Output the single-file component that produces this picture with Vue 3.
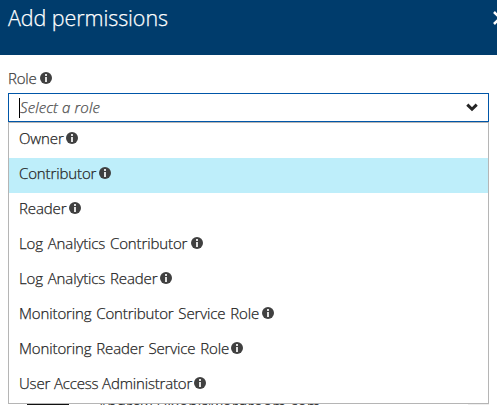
<script setup>
const roles = [
  { name: 'Owner', width: 42.5 },
  { name: 'Contributor', width: 76, active: true },
  { name: 'Reader', width: 45.5 },
  { name: 'Log Analytics Contributor', width: 168 },
  { name: 'Log Analytics Reader', width: 137 },
  { name: 'Monitoring Contributor Service Role', width: 239 },
  { name: 'Monitoring Reader Service Role', width: 208 },
  { name: 'User Access Administrator', width: 171, tight: true },
]
</script>

<template>
  <div class="blade">
    <header class="head">
      <h1>Add permissions</h1>
      <svg class="close" width="14" height="14" viewBox="0 0 14 14"><path d="M1 1L13 13M13 1L1 13" /></svg>
    </header>
    <main class="body">
      <div class="label">
        <span>Role</span>
        <svg class="info" width="12" height="12" viewBox="0 0 12 12"><circle cx="6" cy="6" r="6" /><path d="M5 2h2v2H5zM5 5h2v5H5z" /></svg>
      </div>
      <div class="select">
        <span class="caret"></span>
        <span class="placeholder">Select a role</span>
        <svg class="chevron" width="12" height="9" viewBox="0 0 12 9"><path d="M1.3 1.6L6 6.2L10.7 1.6" /></svg>
      </div>
      <ul class="menu">
        <li v-for="role in roles" :key="role.name" :class="{ active: role.active, tight: role.tight }">
          <span class="name" :style="{ width: role.width + 'px' }">{{ role.name }}</span>
          <svg class="info" width="12" height="12" viewBox="0 0 12 12"><circle cx="6" cy="6" r="6" /><path d="M5 2h2v2H5zM5 5h2v5H5z" /></svg>
        </li>
      </ul>
      <div class="member">
        <span class="avatar"></span>
        <span class="mail">Andrew.Dixon@wordroom.com</span>
        <span class="scroll"></span>
      </div>
    </main>
  </div>
</template>

<style>
body { background: #fff; overflow: hidden; }
</style>

<style scoped>
.blade {
  width: 497px;
  height: 405px;
  overflow: hidden;
  font-family: "Open Sans", "Noto Sans", sans-serif;
  font-size: 15px;
  font-weight: 300;
  letter-spacing: -0.17px;
  -webkit-text-stroke: 0.25px;
  color: #252525;
}
.head {
  height: 55px;
  box-sizing: border-box;
  padding: 4px 0 0 8px;
  display: flex;
  justify-content: space-between;
  overflow: hidden;
  background: #003c6c;
  color: #fff;
}
h1 { margin: 0; font-size: 21.5px; line-height: 28px; font-weight: 300; letter-spacing: -0.08px; }
.close { flex: none; margin: 7px -10px 0 0; fill: none; stroke: #fff; stroke-width: 2.6; }
.body { padding: 0 8px; }
.label { height: 38px; padding-top: 8px; box-sizing: border-box; display: flex; align-items: center; gap: 3px; color: #404040; }
.info { flex: none; fill: #404040; }
.info path { fill: #fff; opacity: 0.85; }
.select {
  height: 29px;
  box-sizing: border-box;
  border: 1px solid #0056a8;
  padding: 0 10px 0 10px;
  display: flex;
  align-items: center;
}
.caret { width: 1px; height: 20px; background: #000; }
.placeholder { flex: 1; padding-bottom: 2px; font-style: italic; color: #505050; white-space: nowrap; letter-spacing: 0.12px; }
.chevron { fill: none; stroke: #252525; stroke-width: 3; }
.menu { list-style: none; margin: 0; padding: 0; border: 1px solid #b5b5b5; background: #fff; }
.menu li { height: 35px; padding: 0 10px 5px; box-sizing: border-box; display: flex; align-items: center; gap: 4px; letter-spacing: -0.12px; word-spacing: 1px; }
.menu li.active { background: #beeefa; }
.menu li.tight { letter-spacing: -0.17px; word-spacing: 0; }
.name { white-space: nowrap; }
.member { display: flex; height: 1px; padding-left: 19px; overflow: hidden; }
.avatar { width: 42px; background: #111; }
.mail { margin: -7px 0 0 29px; width: 370px; line-height: 19px; letter-spacing: 0.45px; }
.scroll { width: 21px; background: #eee; }
</style>
